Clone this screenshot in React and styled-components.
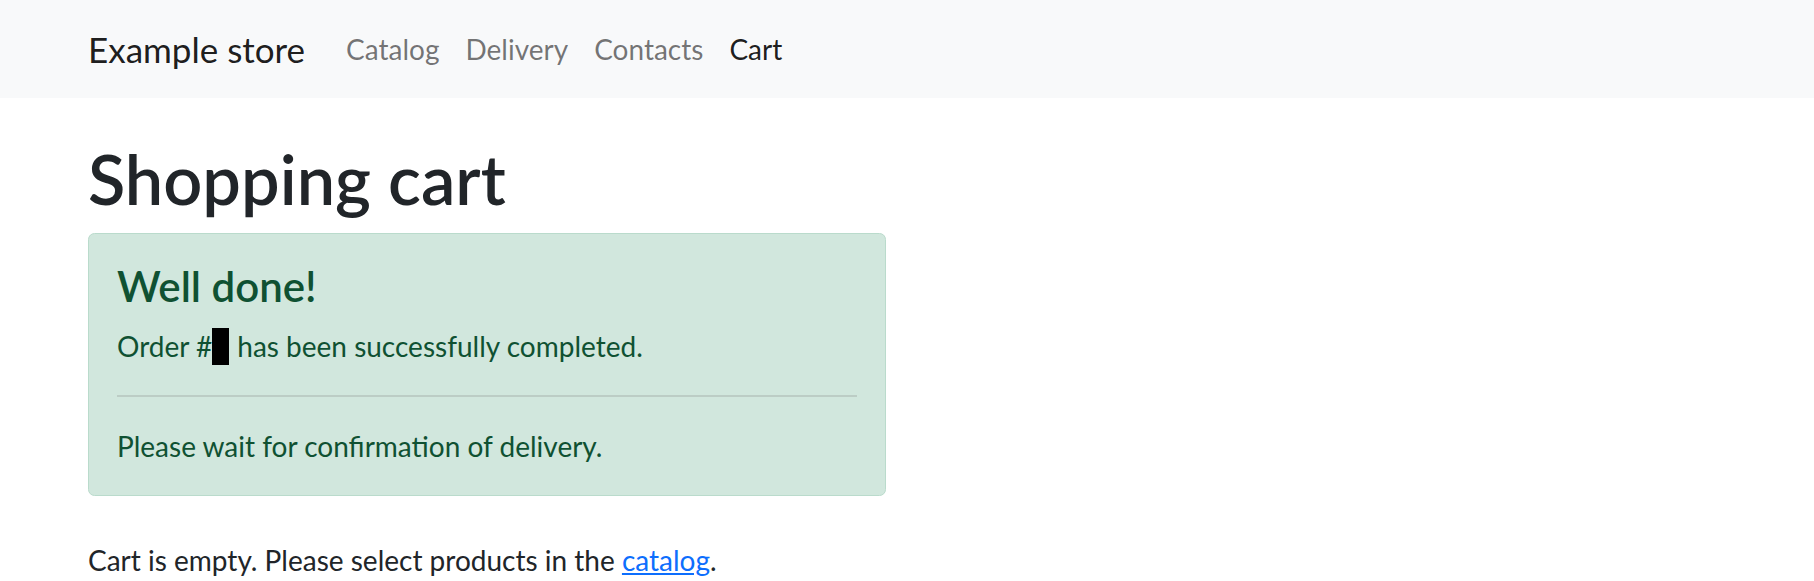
import React from "react";
import styled, { createGlobalStyle } from "styled-components";

const GlobalStyle = createGlobalStyle`
  *, *::before, *::after { box-sizing: border-box; }
  html, body { margin: 0; padding: 0; background: #fff; }
  body {
    font-family: Lato, "Open Sans", sans-serif;
    font-size: 28px;
    line-height: 42px;
    color: #212529;
    -webkit-font-smoothing: antialiased;
  }
`;

const Container = styled.div`
  max-width: 1680px;
  margin: 0 auto;
  padding: 0 21px;
`;

const NavBar = styled.nav`
  background: #f8f9fa;
  padding: 14px 0;
`;

const NavInner = styled(Container)`
  display: flex;
  align-items: center;
`;

const Brand = styled.a`
  font-size: 35px;
  line-height: 52.5px;
  padding: 8.75px 0;
  margin-right: 28px;
  color: rgba(0, 0, 0, 0.9);
  text-decoration: none;
  white-space: nowrap;
`;

const NavList = styled.ul`
  display: flex;
  list-style: none;
  margin: 0;
  padding: 0;
`;

const NavLink = styled.a`
  display: block;
  padding: 14px 13px;
  font-size: 28px;
  line-height: 42px;
  color: ${(p) => (p.$active ? "rgba(0, 0, 0, 0.9)" : "rgba(0, 0, 0, 0.55)")};
  text-decoration: none;
`;

const Title = styled.h1`
  margin: 42px 0 14px;
  font-size: 68.5px;
  line-height: 78.8px;
  font-weight: 600;
  color: #212529;
`;

const Row = styled.div`
  display: grid;
  grid-template-columns: 1fr 1fr;
  column-gap: 42px;
  margin-bottom: 43px;
`;

const Alert = styled.div`
  background: #d1e7dd;
  border: 1px solid #badbcc;
  border-radius: 6.5px;
  padding: 28px;
  color: #0f5132;
`;

const AlertHeading = styled.h4`
  margin: 0 0 14px;
  font-size: 42px;
  line-height: 49.4px;
  font-weight: 600;
  color: inherit;
`;

const Text = styled.p`
  margin: 0 0 ${(p) => (p.$last ? "0" : "28px")};
  font-size: 28px;
  line-height: 42px;
`;

const Divider = styled.hr`
  margin: 28px 0;
  border: 0;
  border-top: 2px solid currentColor;
  opacity: 0.25;
`;

const Redacted = styled.span`
  display: inline-block;
  width: 17px;
  height: 37px;
  background: #000;
  vertical-align: -8px;
  margin-right: 8px;
`;

const Link = styled.a`
  color: #0d6efd;
  text-decoration: underline;
`;

export default function App() {
  return (
    <>
      <GlobalStyle />
      <NavBar>
        <NavInner>
          <Brand href="#">Example store</Brand>
          <NavList>
            <li><NavLink href="#">Catalog</NavLink></li>
            <li><NavLink href="#">Delivery</NavLink></li>
            <li><NavLink href="#">Contacts</NavLink></li>
            <li><NavLink href="#" $active>Cart</NavLink></li>
          </NavList>
        </NavInner>
      </NavBar>
      <Container>
        <Title>Shopping cart</Title>
        <Row>
          <Alert>
            <AlertHeading>Well done!</AlertHeading>
            <Text>
              Order #<Redacted />has been successfully completed.
            </Text>
            <Divider />
            <Text $last>Please wait for confirmation of delivery.</Text>
          </Alert>
        </Row>
        <Text>
          Cart is empty. Please select products in the <Link href="#">catalog</Link>.
        </Text>
      </Container>
    </>
  );
}
